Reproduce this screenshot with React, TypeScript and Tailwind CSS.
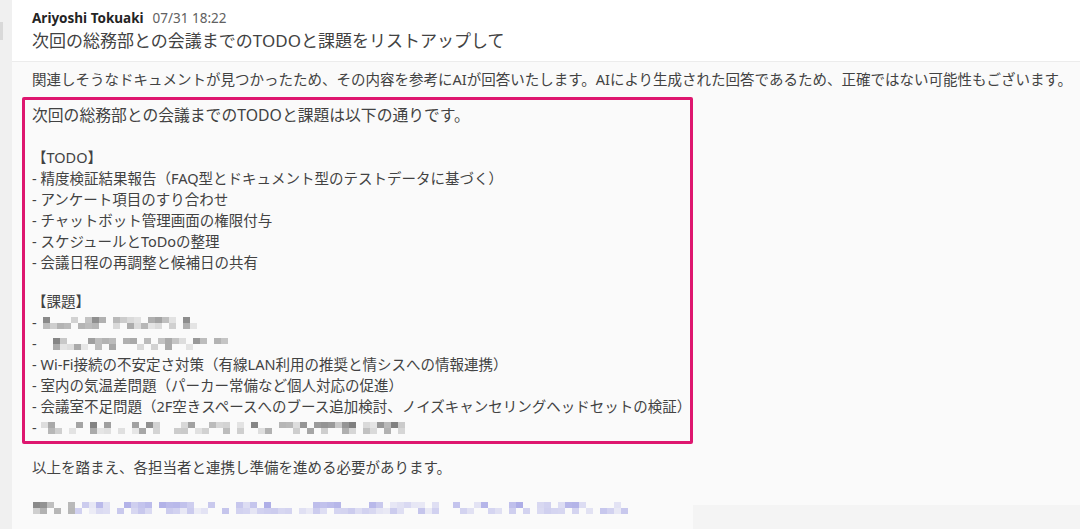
import React from "react";

// pixelated (redacted) text, drawn as a mosaic of cells
function Mosaic({ width, seed, blue = 0 }: { width: number; seed: number; blue?: number }) {
  let s = seed;
  const rnd = () => {
    s = (s * 9301 + 49297) % 233280;
    return s / 233280;
  };
  const cell = 7;
  const cols = Math.floor(width / cell);
  const rects: React.ReactElement[] = [];
  for (let r = 0; r < 2; r++) {
    for (let c = 0; c < cols; c++) {
      const v = rnd();
      if (v < 0.4) continue;
      const isBlue = c * cell > blue && blue > 0;
      const a = 0.1 + rnd() * (r === 0 ? 0.55 : 0.35);
      const fill = isBlue ? `rgba(90,90,210,${a * 0.75})` : `rgba(60,60,60,${a})`;
      rects.push(<rect key={r + "-" + c} x={c * cell} y={r * 6} width={cell} height={6} fill={fill} />);
    }
  }
  return (
    <svg width={width} height={12} className="inline-block align-middle">
      {rects}
    </svg>
  );
}

const todo = [
  "- 精度検証結果報告（FAQ型とドキュメント型のテストデータに基づく）",
  "- アンケート項目のすり合わせ",
  "- チャットボット管理画面の権限付与",
  "- スケジュールとToDoの整理",
  "- 会議日程の再調整と候補日の共有",
];

export default function App() {
  return (
    <div
      className="flex h-[529px] w-[1080px] overflow-hidden bg-[#f3f3f3] text-[#424242]"
      style={{ fontFamily: '"Noto Sans", "Noto Sans CJK JP", sans-serif' }}
    >
      <div className="relative w-[12px] shrink-0 bg-[#f0f0f0]">
        <div className="absolute left-0 top-[22px] h-[18px] w-[3px] bg-[#d9d9d9]" />
      </div>
      <div className="flex flex-1 flex-col">
        <div className="h-[62px] border-b border-[#ececec] bg-white pl-[20px] pt-[9px]">
          <div className="flex items-baseline gap-[9px] text-[13.5px] leading-[18px]">
            <span className="font-bold text-[#242424]">Ariyoshi Tokuaki</span>
            <span className="text-[#616161]">07/31 18:22</span>
          </div>
          <div className="mt-[2px] text-[17px] leading-[24px] text-[#424242]">
            次回の総務部との会議までのTODOと課題をリストアップして
          </div>
        </div>
        <div className="flex flex-1 flex-col bg-[#fafafa]">
          <div className="pl-[20px] pt-[6px] text-[14.5px] leading-[22px]">
            関連しそうなドキュメントが見つかったため、その内容を参考にAIが回答いたします。AIにより生成された回答であるため、正確ではない可能性もございます。
          </div>
          <div className="ml-[10px] mt-[7px] h-[347px] w-[671px] rounded-[2px] border-[3px] border-[#de166f] pl-[7px] pt-[3px] text-[14.5px] leading-[21px]">
            <div className="text-[15.8px] leading-[24px]">次回の総務部との会議までのTODOと課題は以下の通りです。</div>
            <div className="h-[20px]" />
            <div>【TODO】</div>
            {todo.map((t) => (
              <div key={t}>{t}</div>
            ))}
            <div className="h-[18px]" />
            <div>【課題】</div>
            <div className="flex items-center gap-[6px]">
              <span>-</span>
              <Mosaic width={156} seed={11} />
            </div>
            <div className="flex items-center gap-[9px]">
              <span>-</span>
              <Mosaic width={186} seed={47} />
            </div>
            <div>- Wi-Fi接続の不安定さ対策（有線LAN利用の推奨と情シスへの情報連携）</div>
            <div>- 室内の気温差問題（パーカー常備など個人対応の促進）</div>
            <div>- 会議室不足問題（2F空きスペースへのブース追加検討、ノイズキャンセリングヘッドセットの検証）</div>
            <div className="flex items-center gap-[4px]">
              <span>-</span>
              <Mosaic width={366} seed={83} />
            </div>
          </div>
          <div className="pl-[20px] pt-[12px] text-[14.5px] leading-[22px]">
            以上を踏まえ、各担当者と連携し準備を進める必要があります。
          </div>
          <div className="flex flex-1">
            <div className="w-[681px] pl-[21px] pt-[16px]">
              <Mosaic width={600} seed={5} blue={40} />
            </div>
            <div className="flex flex-1 flex-col">
              <div className="h-[27px]" />
              <div className="flex-1 bg-[#f4f4f4]" />
            </div>
          </div>
        </div>
      </div>
    </div>
  );
}
